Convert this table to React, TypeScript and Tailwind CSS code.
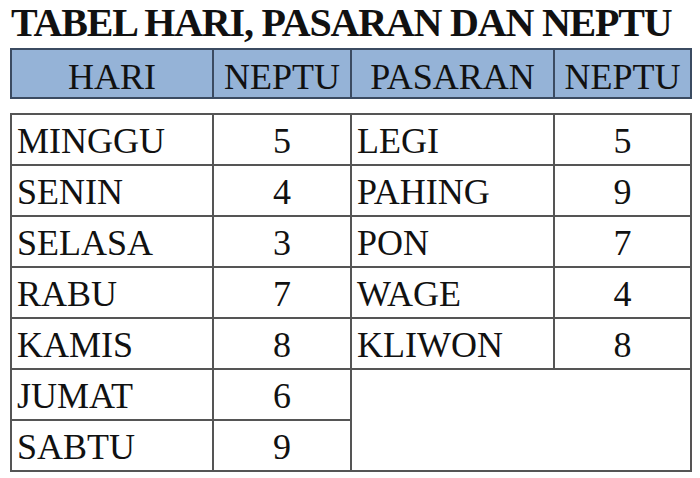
const HARI = [
  { name: "MINGGU", neptu: 5 },
  { name: "SENIN", neptu: 4 },
  { name: "SELASA", neptu: 3 },
  { name: "RABU", neptu: 7 },
  { name: "KAMIS", neptu: 8 },
  { name: "JUMAT", neptu: 6 },
  { name: "SABTU", neptu: 9 },
];

const PASARAN = [
  { name: "LEGI", neptu: 5 },
  { name: "PAHING", neptu: 9 },
  { name: "PON", neptu: 7 },
  { name: "WAGE", neptu: 4 },
  { name: "KLIWON", neptu: 8 },
];

const cols = "grid grid-cols-[200px_136px_201px_135px] gap-[2px] p-[2px]";

export default function App() {
  return (
    <div
      className="w-[700px] h-[478px] bg-white text-[#111] overflow-hidden"
      style={{ fontFamily: '"Liberation Serif", "Times New Roman", serif' }}
    >
      {/* Title */}
      <h1 className="h-[48px] pt-[3px] pl-[11px] text-[40px] tracking-[-1.2px] font-bold leading-none whitespace-nowrap">
        TABEL HARI, PASARAN DAN NEPTU
      </h1>

      <div className="pl-[10px]">
        {/* Header row */}
        <div className={`${cols} w-fit bg-[#3b4b61]`}>
          {["HARI", "NEPTU", "PASARAN", "NEPTU"].map((h, i) => (
            <div
              key={i}
              className="h-[47px] bg-[#95b3d7] flex items-center justify-center pt-[6px] text-[36px] leading-none"
            >
              {h}
            </div>
          ))}
        </div>

        {/* Body */}
        <div className={`${cols} w-fit mt-[14px] bg-[#555] grid-rows-[repeat(7,49px)]`}>
          {HARI.map((h, i) => {
            const p = PASARAN[i];
            return (
              <div key={h.name} className="contents">
                <div className="bg-white flex items-center pl-[5px] pt-[3px] text-[36px] leading-none">
                  {h.name}
                </div>
                <div className="bg-white flex items-center justify-center pt-[3px] text-[36px] leading-none">
                  {h.neptu}
                </div>
                {p ? (
                  <>
                    <div className="bg-white flex items-center pl-[5px] pt-[3px] text-[36px] leading-none">
                      {p.name}
                    </div>
                    <div className="bg-white flex items-center justify-center pt-[3px] text-[36px] leading-none">
                      {p.neptu}
                    </div>
                  </>
                ) : i === PASARAN.length ? (
                  <div className="bg-white col-span-2 row-span-2" />
                ) : null}
              </div>
            );
          })}
        </div>
      </div>
    </div>
  );
}
